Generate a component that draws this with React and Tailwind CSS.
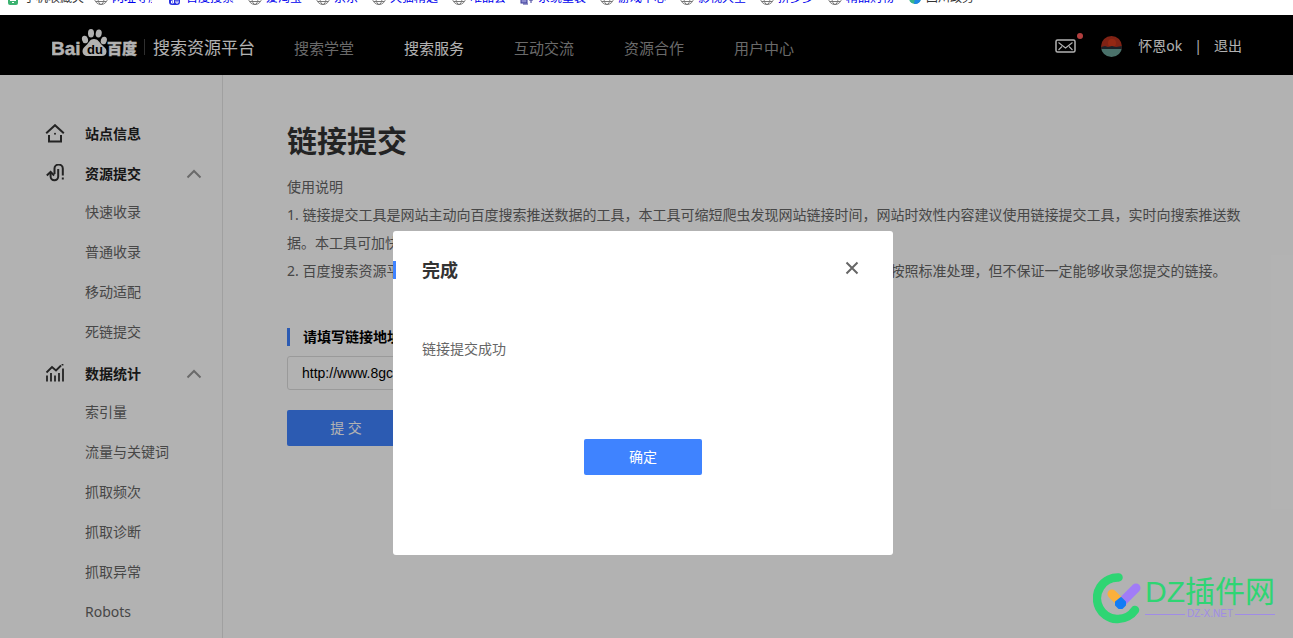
import { useState } from "react";

const marcadores = [
    { texto: "手机收藏夹", icono: "movil", ancho: "w-[86px]", color: "text-[#333]" },
    { texto: "网址导航", icono: "globo", ancho: "w-[74px] pr-4", color: "text-[#0000ee]" },
    { texto: "百度搜索", icono: "baidu", ancho: "w-20", color: "text-[#0000ee]" },
    { texto: "爱淘宝", icono: "globo", ancho: "w-[68px]", color: "text-[#0000ee]" },
    { texto: "京东", icono: "globo", ancho: "w-14", color: "text-[#0000ee]" },
    { texto: "天猫精选", icono: "globo", ancho: "w-20", color: "text-[#0000ee]" },
    { texto: "唯品会", icono: "globo", ancho: "w-[68px]", color: "text-[#0000ee]" },
    { texto: "系统重装", icono: "pc", ancho: "w-20", color: "text-[#0000ee]" },
    { texto: "游戏中心", icono: "globo", ancho: "w-20", color: "text-[#0000ee]" },
    { texto: "影视大全", icono: "globo", ancho: "w-20", color: "text-[#0000ee]" },
    { texto: "拼多多", icono: "globo", ancho: "w-[68px]", color: "text-[#0000ee]" },
    { texto: "精品购物", icono: "globo", ancho: "w-20", color: "text-[#0000ee]" },
    { texto: "四川政务", icono: "edge", ancho: "w-20", color: "text-[#333]" },
];

const navegacion = ["搜索学堂", "搜索服务", "互动交流", "资源合作", "用户中心"];

const menu = [
    { titulo: "站点信息", icono: "casa", hijos: [] },
    { titulo: "资源提交", icono: "enlace", hijos: ["快速收录", "普通收录", "移动适配", "死链提交"] },
    {
        titulo: "数据统计",
        icono: "grafica",
        hijos: ["索引量", "流量与关键词", "抓取频次", "抓取诊断", "抓取异常", "Robots"],
    },
];

function IconoMarcador({ tipo }) {
    switch (tipo) {
        case "movil":
            return (
                <svg viewBox="0 0 12 14" className="w-3 h-3.5 shrink-0">
                    <rect x="0" y="0" width="10" height="14" rx="2" fill="#3cb371" />
                    <rect x="2" y="2" width="6" height="8" fill="#fff" />
                    <rect x="4" y="11" width="2" height="1" fill="#fff" />
                </svg>
            );
        case "baidu":
            return (
                <svg viewBox="0 0 14 14" className="size-3.5 shrink-0" fill="#2932e1">
                    <circle cx="2" cy="6" r="1.5" />
                    <circle cx="5" cy="2" r="1.5" />
                    <circle cx="9" cy="2" r="1.5" />
                    <circle cx="12" cy="6" r="1.5" />
                    <rect x="1" y="5" width="11" height="9" rx="3" />
                    <path d="M5.500 8v4h-2v-2h2M8 9.500v2.500h2v-2.500" fill="none" stroke="#fff" />
                </svg>
            );
        case "pc":
            return (
                <svg viewBox="0 0 14 14" className="size-3.5 shrink-0" fill="none" stroke="#3b3b98">
                    <rect x="1" y="3" width="6" height="9" fill="#8c8ccf" />
                    <path d="M3 13h5M9 3h4v6H9M11 9v3" />
                </svg>
            );
        case "edge":
            return (
                <svg viewBox="0 0 14 14" className="size-3.5 shrink-0">
                    <circle cx="7" cy="7" r="6" fill="#38b48b" />
                    <path d="M7 7h6a6 6 0 0 1-7 6z" fill="#1e88e5" />
                    <circle cx="8" cy="7" r="2" fill="#fff" />
                    <circle cx="11" cy="6" r="2" fill="#f5a623" />
                </svg>
            );
        default:
            return (
                <svg viewBox="0 0 14 14" className="size-3.5 shrink-0" fill="none" stroke="#777">
                    <circle cx="7" cy="7" r="6.5" />
                    <ellipse cx="7" cy="7" rx="3" ry="6.5" />
                    <path d="M1 7h12M2 3.500h10M2 10.500h10" />
                </svg>
            );
    }
}

function IconoMenu({ tipo }) {
    const comun = "w-5 h-5 shrink-0";

    if (tipo === "casa") {
        return (
            <svg viewBox="0 0 20 20" className={comun} fill="none" stroke="#333" strokeWidth="2">
                <path d="M1.200 9.200 10 1.200l8.800 8" />
                <path d="M4 11v6.500h12V11" />
                <circle cx="10" cy="9.800" r="1" fill="#333" stroke="none" />
            </svg>
        );
    }

    if (tipo === "enlace") {
        return (
            <svg viewBox="0 0 20 20" className={comun} fill="none" stroke="#333" strokeWidth="2">
                <path d="M13.200 5v7.500a3.800 3.800 0 0 1-7.600 0V8.500" />
                <path d="M1.800 11.500 5.600 8l3.600 3.500" />
                <path d="M9.500 10V4.500a4.100 3.900 0 0 1 8.300 0V11.500" />
                <path d="M17.800 13.500v2" />
            </svg>
        );
    }

    return (
        <svg viewBox="0 0 20 20" className={comun} fill="none" stroke="#333" strokeWidth="1.800">
            <path d="M1.500 8.500 7 3l4 3.500L16 1.500" />
            <path d="M2 11.500v6M6 9v8.500M10 11.500v6M14 9v8.500M18 4.500v13" />
            <path d="M17.500 -0.500v2" />
        </svg>
    );
}

function LogoBaidu() {
    return (
        <svg viewBox="0 0 86 30" className="w-[86px] h-[30px]" fill="#fff" role="img" aria-label="Baidu 百度">
            <text x="-1" y="27" fontSize="19" fontWeight="bold" stroke="#fff" strokeWidth="0.400" fontFamily="Liberation Sans, sans-serif">Bai</text>
            <ellipse cx="33" cy="11.500" rx="3" ry="3.800" transform="rotate(-15 33 11.500)" />
            <ellipse cx="39" cy="5.300" rx="3" ry="4.200" />
            <ellipse cx="46.700" cy="5.500" rx="3" ry="4" transform="rotate(10 46.700 5.500)" />
            <ellipse cx="51.800" cy="12.500" rx="3" ry="3.800" transform="rotate(15 51.800 12.500)" />
            <path d="M42 11c4 0 5 3 8 6 2.500 2.500 4.500 3.500 4.500 6.500 0 3-2 4.500-5 4.500H36c-3.500 0-5.500-2-5.500-5 0-3 2.500-4.500 4.500-6.500 2.500-2.500 3-5.500 7-5.500z" />
            <text x="35" y="25.500" fontSize="13" fontWeight="bold" fill="#000" fontFamily="Liberation Sans, sans-serif">du</text>
            <text x="55" y="26" fontSize="15" fontWeight="900" stroke="#fff" strokeWidth="0.300" fontFamily="Noto Sans CJK SC, sans-serif">百度</text>
        </svg>
    );
}

function Cabecera() {
    return (
        <header className="flex items-center h-15 bg-black pl-[52px] pr-[51px] text-white">
            <a href="#inicio" className="flex items-center shrink-0 pb-1">
                <LogoBaidu />
                <span className="w-px h-4 mt-2 ml-1.5 mr-2 bg-[#444]" />
                <span className="text-[17px] leading-6 mt-2.5">搜索资源平台</span>
            </a>
            <nav className="flex gap-[50px] ml-[39px] pt-1.5 text-[15px] leading-6">
                {navegacion.map((item) => (
                    <a key={item} href="#nav" className={item === "搜索服务" ? "text-white" : "text-[#999]"}>
                        {item}
                    </a>
                ))}
            </nav>
            <div className="flex items-center ml-auto pt-0.5 text-sm">
                <button aria-label="消息" className="relative mr-[25px]">
                    <svg viewBox="0 0 21 14" className="w-[21px] h-3.5" fill="none" stroke="#fff" strokeWidth="1.500">
                        <rect x="1" y="1" width="19" height="12" rx="1.500" />
                        <path d="M3.500 3.500 10.500 9l7-5.500M3.500 11l3.500-3.500M17.500 11 14 7.500" strokeWidth="1.100" />
                    </svg>
                    <span className="absolute -top-1.5 -right-[7px] size-1.5 rounded-full bg-[#ff5a5a]" />
                </button>
                <svg viewBox="0 0 21 21" className="size-[21px] mr-4">
                    <clipPath id="avatar">
                        <circle cx="10.500" cy="10.500" r="10.500" />
                    </clipPath>
                    <g clipPath="url(#avatar)">
                        <rect width="21" height="13" fill="#b8321e" />
                        <circle cx="11" cy="7" r="4" fill="#d63a1c" />
                        <path d="M0 11l4-1 3 1 4-1 4 1 6-1v4H0z" fill="#26323a" />
                        <rect y="13" width="21" height="8" fill="#6aa398" />
                    </g>
                </svg>
                <a href="#usuario">怀恩ok</a>
                <span className="mx-3">|</span>
                <a href="#salir">退出</a>
            </div>
        </header>
    );
}

function MenuLateral() {
    return (
        <aside className="w-[223px] shrink-0 border-r border-[#e5e5e5] pt-[39px] pl-[45px] pr-5 text-sm">
            {menu.map((grupo) => (
                <div key={grupo.titulo}>
                    <button className="flex items-center w-full h-10 font-bold text-[#222]">
                        <IconoMenu tipo={grupo.icono} />
                        <span className="ml-5">{grupo.titulo}</span>
                        {grupo.hijos.length > 0 && (
                            <svg viewBox="0 0 16 10" className="w-4 h-2.5 ml-auto" fill="none" stroke="#999" strokeWidth="2">
                                <path d="M1.500 8.500 8 2l6.500 6.500" />
                            </svg>
                        )}
                    </button>
                    {grupo.hijos.length > 0 && (
                        <ul className="-mt-0.5 mb-0.5 pl-10 text-[#666]">
                            {grupo.hijos.map((hijo) => (
                                <li key={hijo} className="leading-10">
                                    <a href="#menu">{hijo}</a>
                                </li>
                            ))}
                        </ul>
                    )}
                </div>
            ))}
        </aside>
    );
}

function Dialogo({ onCerrar }) {
    return (
        <div className="absolute inset-0 flex items-start justify-center bg-black/30 pt-[216px] pr-[7px]">
            <div role="dialog" aria-labelledby="titulo-dialogo" className="w-[500px] rounded-[3px] bg-white pt-[30px] pb-20">
                <div className="flex items-center h-[18px] border-l-3 border-[#3f83ff] pl-[26px] pr-[34px]">
                    <h2 id="titulo-dialogo" className="text-lg font-bold text-[#333]">完成</h2>
                    <button aria-label="关闭" onClick={onCerrar} className="ml-auto pb-1 cursor-pointer">
                        <svg viewBox="0 0 14 14" className="size-3.5" fill="none" stroke="#666" strokeWidth="2">
                            <path d="M1.500 1.500l11 11M12.500 1.500l-11 11" />
                        </svg>
                    </button>
                </div>
                <p className="mt-15 px-[29px] text-sm leading-5 text-[#666]">链接提交成功</p>
                <button
                    onClick={onCerrar}
                    className="block w-[118px] h-9 mt-20 mx-auto rounded-xs bg-[#3f83ff] text-sm text-white cursor-pointer"
                >
                    确定
                </button>
            </div>
        </div>
    );
}

function MarcaAgua() {
    return (
        <div className="absolute right-[18px] bottom-3.5 flex items-center gap-1">
            <svg viewBox="0 0 48 52" className="w-12 h-[52px]" fill="none" strokeLinecap="round">
                <path d="M25.500 5.500A20.800 20.800 0 1 0 42 38" stroke="#2ed573" strokeWidth="8.500" />
                <path d="M28 31 43 16" stroke="#a17cf7" strokeWidth="9" />
                <path d="M19 22l9 9" stroke="#fbb03b" strokeWidth="9" />
                <path d="M28 26l4 4v3l-3 3h-3l-3-3v-3z" fill="#117cf5" stroke="#117cf5" strokeWidth="2" strokeLinejoin="round" />
            </svg>
            <div className="pb-1">
                <p className="font-['Liberation_Sans','Noto_Sans_CJK_SC',sans-serif] text-[30px] leading-9 text-[#2ed573]">DZ插件网</p>
                <div className="flex items-center gap-0.5 text-[10px] leading-2 text-[#a08ce6]">
                    <span className="flex-1 h-px bg-[#a08ce6]" />
                    <span className="font-['Liberation_Sans',sans-serif]">DZ-X.NET</span>
                    <span className="flex-1 h-px bg-[#a08ce6]" />
                </div>
            </div>
        </div>
    );
}

export default function App() {
    const [abierto, setAbierto] = useState(true);
    const [url, setUrl] = useState("http://www.8gc");

    return (
        <div className="flex flex-col h-screen overflow-hidden bg-white font-['Noto_Sans','Noto_Sans_CJK_SC',sans-serif]">
            <div className="flex items-end h-[15px] shrink-0 overflow-hidden pb-[9px] pl-2 text-xs">
                {marcadores.map((m) => (
                    <a key={m.texto} href="#marcador" className={`flex items-center gap-1 shrink-0 h-4 ${m.ancho} ${m.color}`}>
                        <IconoMarcador tipo={m.icono} />
                        <span className="whitespace-nowrap overflow-hidden">{m.texto}</span>
                    </a>
                ))}
            </div>

            <div className="relative flex flex-col flex-1 min-h-0 overflow-hidden">
                <Cabecera />
                <div className="flex flex-1">
                    <MenuLateral />
                    <main className="flex-1 pt-[46px] pl-16 pr-12 text-sm">
                        <h1 className="text-3xl leading-10 font-bold text-[#333]">链接提交</h1>
                        <div className="mt-3 leading-7 text-[#666]">
                            <p>使用说明</p>
                            <p>
                                1. 链接提交工具是网站主动向百度搜索推送数据的工具，本工具可缩短爬虫发现网站链接时间，网站时效性内容建议使用链接提交工具，实时向搜索推送数据。本工具可加快爬虫抓取速度，无法解决网站内容是否收录问题
                            </p>
                            <p>
                                2. 百度搜索资源平台为站长提供链接提交通道，您可以提交想被百度收录的链接，百度搜索引擎会按照标准处理，但不保证一定能够收录您提交的链接。
                            </p>
                        </div>
                        <form onSubmit={(e) => e.preventDefault()}>
                            <label
                                htmlFor="url"
                                className="flex items-center h-[18px] mt-[43px] border-l-3 border-[#3f83ff] pl-[13px] font-bold text-black"
                            >
                                请填写链接地址
                            </label>
                            <input
                                id="url"
                                type="text"
                                value={url}
                                onChange={(e) => setUrl(e.target.value)}
                                className="block w-[500px] h-[34px] mt-2.5 px-3.5 border border-[#ddd] rounded-[3px] font-['Liberation_Sans',sans-serif] text-sm text-black"
                            />
                            <button className="block w-[118px] h-9 mt-5 rounded-xs bg-[#3f83ff] text-white cursor-pointer">提 交</button>
                        </form>
                    </main>
                </div>
                {abierto && <Dialogo onCerrar={() => setAbierto(false)} />}
                <MarcaAgua />
            </div>
        </div>
    );
}
